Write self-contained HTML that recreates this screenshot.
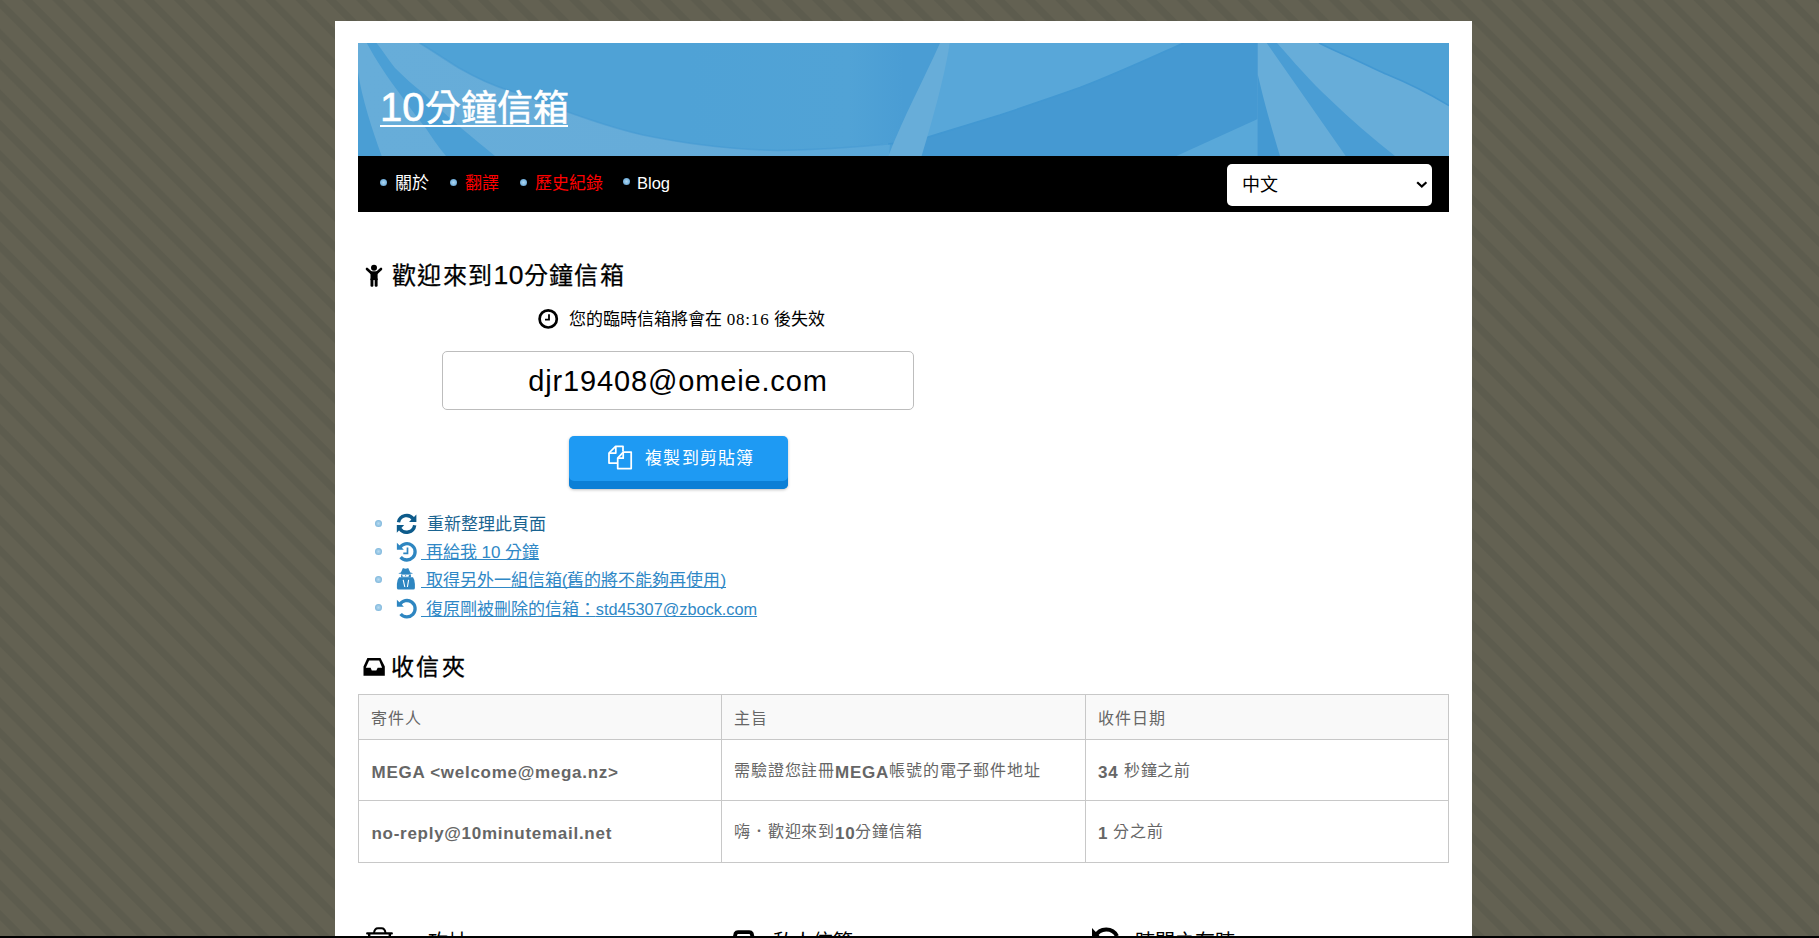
<!DOCTYPE html>
<html lang="zh-TW">
<head>
<meta charset="utf-8">
<title>10分鐘信箱</title>
<style>
html,body{margin:0;padding:0;}
body{width:1819px;height:938px;overflow:hidden;position:relative;font-family:"Liberation Sans",sans-serif;
background:repeating-linear-gradient(45deg,#636152 0,#636152 12px,#5d5c4e 13.2px,#5d5c4e 19.3px,#636152 20.5px,#636152 21.489px);}
.abs{position:absolute;}
#wrap{position:absolute;left:335px;top:21px;width:1137px;height:917px;background:#fff;}
#hdr{position:absolute;left:358px;top:43px;width:1091px;height:113px;overflow:hidden;}
#hdr svg{position:absolute;left:0;top:0;}
#title{position:absolute;left:380px;top:82px;font-size:36px;font-weight:500;-webkit-text-stroke:0.5px #fff;color:#fff;white-space:nowrap;line-height:50px;}
#nav{position:absolute;left:358px;top:156px;width:1091px;height:56px;background:#000;}
.nb{position:absolute;width:7px;height:7px;border-radius:50%;background:radial-gradient(circle at 50% 50%,#b2d6ef 0,#86bde4 45%,#4f8fc4 100%);}
.nt{position:absolute;font-size:17px;line-height:20px;white-space:nowrap;}
#sel{position:absolute;left:1227px;top:164px;width:205px;height:42px;background:#fff;border-radius:5px;box-sizing:border-box;}
#sel span{position:absolute;left:15px;top:10px;font-size:18px;line-height:22px;color:#000;}
#sel svg{position:absolute;left:189px;top:17px;}
.t{position:absolute;white-space:nowrap;}
svg.i{position:absolute;overflow:visible;}
#email{position:absolute;left:442px;top:351px;width:472px;height:59px;box-sizing:border-box;border:1px solid #bdbdbd;border-radius:5px;background:#fff;}
#email span{position:absolute;left:0;right:0;top:13px;text-align:center;font-size:29px;line-height:32px;color:#000;letter-spacing:0.85px;}
#btn{position:absolute;left:569px;top:436px;width:219px;height:53px;border-radius:5px;background:#1e9af3;box-shadow:inset 0 -8px 0 #0b7fd6,0 1px 3px rgba(0,0,0,.25);}
.li{position:absolute;left:375px;width:7px;height:7px;border-radius:50%;background:radial-gradient(circle at 50% 50%,#b9dbf0 0,#8dc1e2 55%,#5d9ccc 100%);}
.lt{position:absolute;left:421px;font-size:17px;line-height:22px;white-space:nowrap;}
.lk{color:#2f88c6;text-decoration:underline;text-decoration-skip-ink:none;}
table{position:absolute;left:358px;top:694px;width:1091px;border-collapse:collapse;}
td,th{border:1px solid #c8c8c8;padding:0 12px;text-align:left;color:#666;white-space:nowrap;font-size:17px;}
th{background:#f9f9f9;font-weight:normal;height:43px;padding-bottom:1px;font-size:16px;letter-spacing:0.85px;}
b{font-weight:bold;letter-spacing:0.72px;}
.r1 td{height:59px;padding-top:1px;padding-bottom:0;}
.r2 td{height:60px;padding-top:1px;padding-bottom:0;}
.r1 b{position:relative;top:2px;}
.r2 b{position:relative;top:1.5px;}
td:first-child{padding-left:12.5px;}
td{font-size:16px;letter-spacing:0.85px;line-height:20px;}
td b{font-size:17px;}
</style>
</head>
<body>
<div id="wrap"></div>
<div id="hdr">
<svg width="1091" height="113" viewBox="0 0 1091 113">
<defs>
<linearGradient id="gl" x1="0" y1="0" x2="1091" y2="0" gradientUnits="userSpaceOnUse"><stop offset="0" stop-color="#67add9"/><stop offset="0.3" stop-color="#66acd9"/><stop offset="0.5" stop-color="#58a7d9"/></linearGradient>
<linearGradient id="gm" x1="0" y1="0" x2="1091" y2="0" gradientUnits="userSpaceOnUse"><stop offset="0.3" stop-color="#4fa2d6"/><stop offset="0.45" stop-color="#51a3d6"/><stop offset="0.5" stop-color="#4a9dd4"/></linearGradient>
</defs>
<rect width="1091" height="113" fill="url(#gm)"/>
<path fill="url(#gl)" d="M0 0 H61.6 C75 8 88 17 101 25 C122 37 140 45 160 50 C200 66 250 84 285 92 C320 99 360 106 420 107.5 C460 107 500 104 532 100 L531 113 H0 Z"/>
<path fill="none" stroke="#4499d2" stroke-width="1.6" stroke-opacity="0.6" d="M61.6 0 C75 8 88 17 101 25 C122 37 140 45 160 50 C200 66 250 84 285 92 C320 99 360 106 420 107.5 C460 107 500 104 530 101"/>
<path fill="#4b9fd5" d="M8.8 0 H18.5 C25 8 30 16 37 25 C46 34 55 42 65 50 C78 62 90 74 103 85 C114 94 125 103 137 113 H88 C80 104 74 94 67.7 85 C58 73 50 62 41.3 50 C35 42 29 33 23.7 25 C18 16 13 8 8.8 0 Z"/>
<path fill="#4a9ed4" d="M0 29 C4 56 14 86 23.7 113 H0 Z"/>
<polygon fill="#4599d2" points="585,0 900,0 900,113 560,113"/>
<path fill="#58a7d9" d="M592 0 H825.6 C790 16 760 30 722 44.6 C690 56 660 66 642 72 C610 82 590 88 567 95 Z"/>
<path fill="none" stroke="#4298d2" stroke-width="1.6" d="M825.6 0 C790 16 760 30 722 44.6 C690 56 660 66 642 72 C610 82 590 88 567 95 C555 98 540 100 530 101"/>
<polygon fill="#59a8d9" points="818.4,113 899.7,75.9 899.7,113"/>

<path fill="#67add9" d="M582 0 H592 C585 40 575 75 563.6 113 H530.4 C545 75 565 38 582 0 Z"/>
<polygon fill="#67add9" points="899.7,0 1091,0 1091,113 899.7,113"/>
<path fill="#4499d2" d="M899.7 31.3 C903 45 906 58 910 72 C914 86 918 100 922 113 H899.7 Z"/>
<path fill="#4a9dd4" d="M908.7 0 H919 C935 18 952 38 972 56.5 C992 76 1014 95 1037 113 H987.7 L908.7 0 Z"/>
<path fill="#4ea1d5" d="M961 0 H1091 V62.6 C1070 50 1050 40 1028.6 31.3 C1015 25 1004 20 992.5 14.5 C982 10 971 5 961 0 Z"/>
<path fill="none" stroke="#4298d2" stroke-width="1.6" d="M1091 62.6 C1070 50 1050 40 1028.6 31.3 C1015 25 1004 20 992.5 14.5 C982 10 971 5 961 0"/>
</svg>
</div>
<div class="abs" style="left:380px;top:124.5px;width:188px;height:2px;background:#fff"></div>
<div id="title"><span style="font-size:40px;font-weight:normal;-webkit-text-stroke:0.6px #fff">10</span>分鐘信箱</div>
<div id="nav"></div>
<div class="nb" style="left:380px;top:179px"></div>
<div class="nt" style="left:395px;top:174px;color:#fff">關於</div>
<div class="nb" style="left:450px;top:179px"></div>
<div class="nt" style="left:465px;top:174px;color:#f00">翻譯</div>
<div class="nb" style="left:520px;top:179px"></div>
<div class="nt" style="left:535px;top:174px;color:#f00">歷史紀錄</div>
<div class="nb" style="left:623px;top:178px"></div>
<div class="nt" style="left:637px;top:173px;color:#fff;font-size:16.5px">Blog</div>
<div id="sel"><span>中文</span><svg width="12" height="8" viewBox="0 0 12 8"><path d="M1.2 1.2 L5.8 5.6 L10.4 1.2" stroke="#000" stroke-width="2.2" fill="none"/></svg></div>

<!-- child icon -->
<svg class="i" style="left:360px;top:258px" width="30" height="34" viewBox="0 0 30 34">
<circle cx="14" cy="9.7" r="3.0" fill="#000"/>
<path d="M7 11 L11.3 15 M21 11 L16.7 15" stroke="#000" stroke-width="2.6" stroke-linecap="round"/>
<rect x="10.5" y="13.3" width="7.1" height="8.8" fill="#000"/>
<rect x="10.5" y="20" width="2.9" height="8.8" rx="1.2" fill="#000"/>
<rect x="14.7" y="20" width="2.9" height="8.8" rx="1.2" fill="#000"/>
</svg>
<div class="t" style="left:392px;top:259px;font-size:24px;line-height:32px;color:#000;letter-spacing:1.4px;font-weight:500;-webkit-text-stroke:0.25px #000">歡迎來到<span style="font-size:26.5px;letter-spacing:0.3px">10</span>分鐘信箱</div>

<!-- clock icon -->
<svg class="i" style="left:534px;top:305px" width="28" height="28" viewBox="0 0 28 28">
<circle cx="14.2" cy="13.9" r="8.6" stroke="#000" stroke-width="2.7" fill="none"/>
<path d="M15 9.2 V14.7 H11" stroke="#000" stroke-width="1.8" fill="none"/>
</svg>
<div class="t" style="left:569px;top:309px;font-size:17px;line-height:22px;color:#000">您的臨時信箱將會在 <span style="font-family:'Liberation Serif',serif;letter-spacing:0.8px">08:16</span> 後失效</div>
<div id="email"><span>djr19408@omeie.com</span></div>
<div id="btn"></div>
<!-- copy icon -->
<svg class="i" style="left:602px;top:440px" width="36" height="34" viewBox="0 0 36 34">
<g stroke="#fff" stroke-width="1.75" fill="none" stroke-linejoin="round">
<path d="M15 23.1 H7 V13 L13.6 6.3 H21 V11.5"/>
<path d="M13.8 6.5 V13 H7.2"/>
<path d="M15.7 18.2 L21.3 12.1 H29.2 V28.6 H15.7 Z"/>
<path d="M21.2 12.3 V18.2 H15.9"/>
</g>
</svg>
<div class="t" style="left:645px;top:448px;font-size:17px;line-height:22px;color:#fff;letter-spacing:1.3px">複製到剪貼簿</div>

<div class="li" style="top:520px"></div>
<div class="li" style="top:548px"></div>
<div class="li" style="top:576px"></div>
<div class="li" style="top:604px"></div>
<!-- refresh -->
<svg class="i" style="left:393px;top:510px" width="28" height="28" viewBox="0 0 28 28">
<g fill="none" stroke="#0d5b8b" stroke-width="3.4">
<path d="M5.5 12.2 A8.2 8.2 0 0 1 20.4 9.2"/>
<path d="M21.7 15.2 A8.2 8.2 0 0 1 6.8 18.6"/>
</g>
<polygon fill="#0d5b8b" points="23.4,4.6 23.4,11.9 16,11.9"/>
<polygon fill="#0d5b8b" points="3.8,15 11.2,15 3.8,22.8"/>
</svg>
<!-- history -->
<svg class="i" style="left:393px;top:538px" width="28" height="28" viewBox="0 0 28 28">
<path d="M6.8 9.7 A8.2 8.2 0 1 1 7.62 19.07" fill="none" stroke="#2e86c1" stroke-width="3.3"/>
<polygon fill="#2e86c1" points="3.9,4.8 3.9,11.8 10.9,11.8"/>
<path d="M14.5 9.4 V15.3 H10.3" fill="none" stroke="#2e86c1" stroke-width="1.7"/>
</svg>
<!-- user secret -->
<svg class="i" style="left:393px;top:566px" width="28" height="28" viewBox="0 0 28 28">
<g fill="#2e86c1">
<path d="M9.9 2.1 Q12.5 3.4 15.2 2.1 L17.3 6.4 Q19.9 6.9 19.9 7.4 Q12.6 8.6 5.4 7.4 Q5.4 6.9 7.9 6.4 Z"/>
<path d="M8.1 8.4 H17.9 V11.4 H8.1 Z"/>
<path d="M6.1 11.3 H20 Q21.9 14 21.9 18 V22 Q21.9 23.6 20.3 23.6 H5.6 Q3.9 23.6 3.9 22 V18 Q3.9 14 6.1 11.3 Z"/>
</g>
<path d="M9.2 9 H12.1 L12.7 10.4 L13.3 9 H16 L15.5 10.8 H9.7 Z" fill="#fff"/>
<path d="M10.2 13.9 L11.8 21 M15.6 13.9 L14.4 21" fill="none" stroke="#fff" stroke-width="1.1"/>
</svg>
<!-- undo -->
<svg class="i" style="left:393px;top:594px" width="28" height="28" viewBox="0 0 28 28">
<path d="M6.8 10.6 A8.2 8.2 0 1 1 7.62 19.97" fill="none" stroke="#2e86c1" stroke-width="3.3"/>
<polygon fill="#2e86c1" points="3.9,5.8 3.9,12.8 10.9,12.8"/>
</svg>
<div class="lt" style="top:514px;left:427px;color:#1a6491">重新整理此頁面</div>
<div class="lt lk" style="top:542px">&nbsp;再給我 10 分鐘</div>
<div class="lt lk" style="top:570px">&nbsp;取得另外一組信箱(舊的將不能夠再使用)</div>
<div class="lt lk" style="top:598px">&nbsp;復原剛被刪除的信箱：<span style="font-size:16.3px">std45307@zbock.com</span></div>

<!-- inbox icon -->
<svg class="i" style="left:360px;top:652px" width="30" height="30" viewBox="0 0 30 30">
<path fill="#000" fill-rule="evenodd" d="M7.4 6.1 H20.5 L24.8 14.4 V23.8 H3.5 V14.4 Z M9.1 8.6 H19.2 L22.1 15.8 H17.7 L16.3 18.5 H11.8 L10.6 15.8 H5.8 Z"/>
</svg>
<div class="t" style="left:391px;top:651px;font-size:23px;line-height:32px;color:#000;font-weight:500;letter-spacing:2.4px;-webkit-text-stroke:0.3px #000">收信夾</div>

<table>
<tr><th style="width:338px">寄件人</th><th style="width:339px">主旨</th><th>收件日期</th></tr>
<tr class="r1"><td><b>MEGA &lt;welcome@mega.nz&gt;</b></td><td>需驗證您註冊<b>MEGA</b>帳號的電子郵件地址</td><td><b>34</b> 秒鐘之前</td></tr>
<tr class="r2"><td><b>no-reply@10minutemail.net</b></td><td>嗨．歡迎來到<b>10</b>分鐘信箱</td><td><b>1</b> 分之前</td></tr>
</table>

<!-- footer (cut off) -->
<svg class="i" style="left:360px;top:920px" width="40" height="18" viewBox="0 0 40 18">
<path d="M14 13 Q14.5 8.3 18 8.3 H21.5 Q25 8.3 25.5 13" fill="none" stroke="#000" stroke-width="2"/>
<rect x="6.1" y="12.2" width="26.8" height="2.3" rx="1" fill="#000"/>
<rect x="8" y="14" width="2.4" height="4" fill="#000"/><rect x="28.6" y="14" width="2.4" height="4" fill="#000"/>
</svg>
<svg class="i" style="left:725px;top:920px" width="40" height="18" viewBox="0 0 40 18">
<path d="M9.3 19 L10.6 13.5 Q11.3 12.2 13 12.2 H24.3 Q26 12.2 26.7 13.5 L28 19" fill="none" stroke="#000" stroke-width="3.8" stroke-linejoin="round"/>
</svg>
<svg class="i" style="left:1085px;top:920px" width="40" height="18" viewBox="0 0 40 18">
<path d="M10.4 16.5 A12 12 0 0 1 32 16.2" fill="none" stroke="#000" stroke-width="4"/>
<polygon points="7,8 7,17.5 16,17.5" fill="#000"/>
</svg>
<div class="t" style="left:428px;top:929px;font-size:20px;line-height:26px;color:#000">攻址</div>
<div class="t" style="left:773px;top:929px;font-size:20px;line-height:26px;color:#000">私人信箱</div>
<div class="t" style="left:1135px;top:929px;font-size:20px;line-height:26px;color:#000">時間之有時</div>
<div class="abs" style="left:0;top:936px;width:1819px;height:2px;background:#000"></div>
</body>
</html>
